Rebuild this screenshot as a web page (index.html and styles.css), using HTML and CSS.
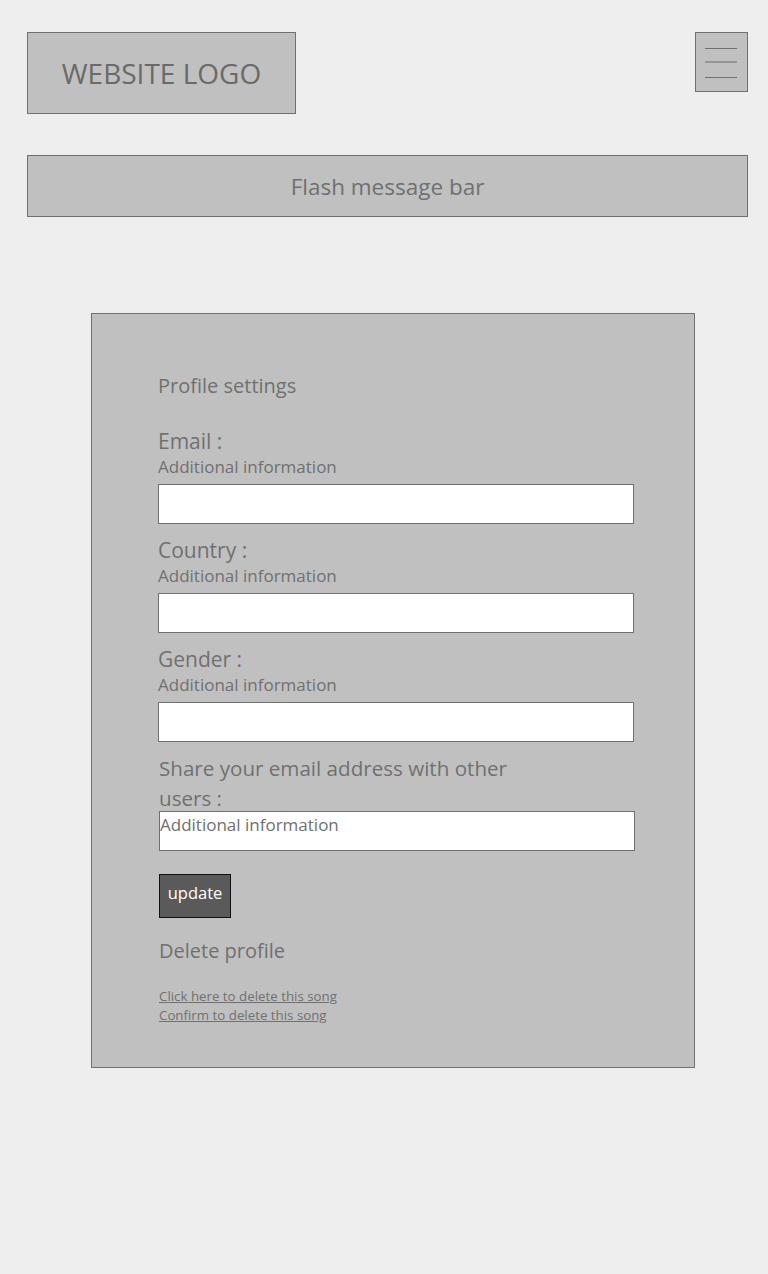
FILE: index.html
```html
<!DOCTYPE html>
<html lang="en">
<head>
<meta charset="utf-8">
<title>Profile settings</title>
<link rel="stylesheet" href="styles.css">
</head>
<body>
<header class="top">
  <div class="logo">WEBSITE LOGO</div>
  <button class="menu" aria-label="Menu">
    <svg width="53" height="60" viewBox="0 0 53 60">
      <line x1="10" y1="16.5" x2="42" y2="16.5" stroke="#707070" stroke-width="1"/>
      <line x1="10" y1="30" x2="42" y2="30" stroke="#959595" stroke-width="2"/>
      <line x1="10" y1="45.5" x2="42" y2="45.5" stroke="#707070" stroke-width="1"/>
    </svg>
  </button>
</header>
<div class="flash">Flash message bar</div>
<main class="card">
  <h1 class="title">Profile settings</h1>
  <div class="field first">
    <label class="label">Email :</label>
    <div class="info">Additional information</div>
    <div class="input"></div>
  </div>
  <div class="field">
    <label class="label">Country :</label>
    <div class="info">Additional information</div>
    <div class="input"></div>
  </div>
  <div class="field">
    <label class="label">Gender :</label>
    <div class="info">Additional information</div>
    <div class="input"></div>
  </div>
  <div class="field share">
    <label class="label share-label">Share your email address with other users :</label>
    <div class="input share-input">Additional information</div>
  </div>
  <button class="update">update</button>
  <h2 class="delete">Delete profile</h2>
  <div class="links">
    <a href="#" class="link">Click here to delete this song</a>
    <a href="#" class="link">Confirm to delete this song</a>
  </div>
</main>
</body>
</html>
```
FILE: styles.css
```css
* { box-sizing: border-box; }
html, body { margin: 0; padding: 0; }
body {
  background: #eeeeee;
  font-family: "Open Sans", "Noto Sans", sans-serif;
  color: #707070;
  width: 768px;
  min-height: 1274px;
}
.top {
  display: flex;
  justify-content: space-between;
  align-items: flex-start;
  padding: 32px 20px 0 27px;
}
.logo {
  width: 269px;
  height: 82px;
  background: #c0c0c0;
  border: 1px solid #707070;
  display: flex;
  align-items: center;
  justify-content: center;
  font-size: 28px;
  color: #6a6a6a;
  padding-bottom: 1px;
}
.menu {
  width: 53px;
  height: 60px;
  padding: 0;
  margin: 0;
  background: #c0c0c0;
  border: 1px solid #707070;
  display: block;
}
.menu svg { display: block; margin: -1px; }
.flash {
  margin: 41px 20px 0 27px;
  height: 62px;
  background: #c0c0c0;
  border: 1px solid #707070;
  display: flex;
  align-items: center;
  justify-content: center;
  font-size: 22.5px;
  padding-top: 1px;
}
.card {
  display: block;
  margin: 96px 0 0 91px;
  width: 604px;
  height: 755px;
  background: #c0c0c0;
  border: 1px solid #707070;
  padding: 59px 0 0 66px;
}
.title {
  margin: 0;
  font-weight: normal;
  font-size: 20px;
  line-height: 26px;
}
.field { display: flex; flex-direction: column; margin-top: 13px; }
.field.first { margin-top: 29px; }
.label {
  font-size: 21px;
  line-height: 26px;
}
.info {
  margin-top: 1px;
  font-size: 17px;
  line-height: 24px;
}
.input {
  margin-top: 5px;
  width: 476px;
  height: 40px;
  background: #ffffff;
  border: 1px solid #707070;
}
.share { margin-top: 11px; margin-left: 1px; }
.share-label {
  width: 360px;
  font-size: 20.6px;
  line-height: 30px;
}
.share-input {
  margin-top: -2px;
  font-size: 17px;
  line-height: 24px;
  padding: 1px 0 0 0;
}
.update {
  display: flex;
  justify-content: center;
  align-items: flex-start;
  margin: 23px 0 0 1px;
  width: 72px;
  height: 44px;
  background: #5a5a5a;
  border: 1px solid #111111;
  color: #ffffff;
  font-family: inherit;
  font-size: 16.5px;
  padding: 6px 0 0 0;
  line-height: 24px;
}
.delete {
  margin: 20px 0 0 1px;
  font-weight: normal;
  font-size: 20px;
  line-height: 26px;
}
.links {
  margin: 23px 0 0 1px;
  display: flex;
  flex-direction: column;
}
.link {
  color: #707070;
  font-size: 13.3px;
  line-height: 19px;
  text-decoration: underline;
}
```
